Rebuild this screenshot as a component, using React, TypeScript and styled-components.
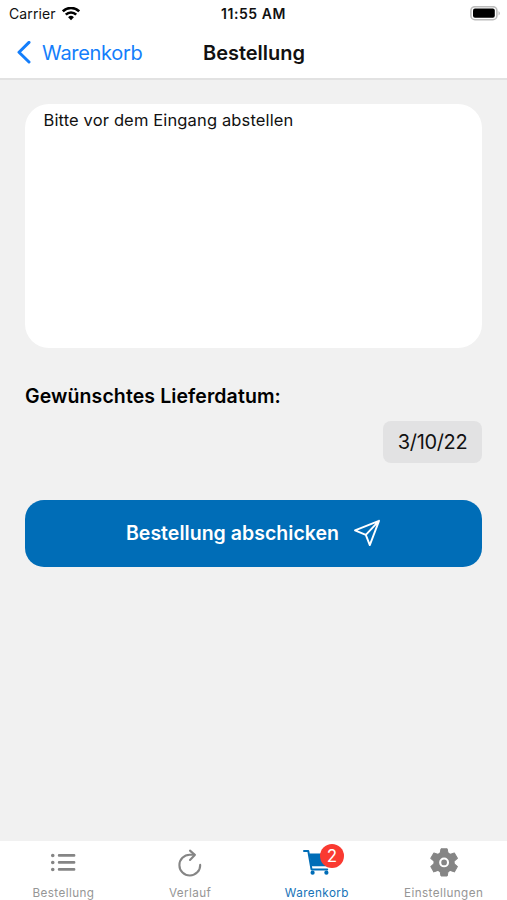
import React from 'react';
import styled, { createGlobalStyle } from 'styled-components';

const GlobalStyle = createGlobalStyle`
  * { box-sizing: border-box; }
  body { margin: 0; background: #f1f1f1; }
  button { font: inherit; border: 0; margin: 0; padding: 0; background: none; }
`;

const Screen = styled.div`
  display: flex;
  flex-direction: column;
  height: 900px;
  width: 507px;
  overflow: hidden;
  background: #f1f1f1;
  color: #111;
  font-family: Inter, 'Liberation Sans', sans-serif;
`;

const Header = styled.header`
  flex: none;
  height: 80px;
  background: #fff;
  border-bottom: 2px solid #e2e2e2;
`;

const Bar = styled.div<{ $height: number }>`
  display: grid;
  grid-template-columns: 1fr auto 1fr;
  align-items: center;
  height: ${(p) => p.$height}px;
`;

const Carrier = styled.div`
  display: flex;
  align-items: center;
  gap: 6px;
  padding-left: 9px;
  font-size: 14px;
  letter-spacing: 0.1px;
`;

const Clock = styled.div`
  font-size: 14px;
  font-weight: 600;
  letter-spacing: 0.55px;
`;

const Battery = styled.div`
  display: flex;
  justify-content: flex-end;
  padding-right: 6px;
`;

const Back = styled.button`
  display: flex;
  align-items: center;
  gap: 10px;
  padding-left: 17px;
  color: #147efb;
  font-size: 20px;
  letter-spacing: -0.3px;
`;

const Title = styled.h1`
  margin: 0;
  padding-left: 1px;
  font-size: 20px;
  font-weight: 600;
  letter-spacing: -0.02px;
`;

const Content = styled.main`
  flex: 1;
  display: flex;
  flex-direction: column;
  padding: 24px 25px 0;
`;

const Note = styled.div`
  height: 244px;
  padding: 5px 18.5px;
  border-radius: 24px;
  background: #fff;
  font-size: 16.5px;
  line-height: 22px;
  letter-spacing: 0.14px;
`;

const FieldLabel = styled.div`
  margin-top: 35px;
  font-size: 19.5px;
  font-weight: 600;
  line-height: 26px;
  letter-spacing: 0.1px;
  color: #000;
`;

const DateField = styled.button`
  align-self: flex-end;
  width: 99px;
  height: 42px;
  margin-top: 12px;
  border-radius: 8px;
  background: #e2e2e3;
  color: #111;
  font-size: 20px;
  letter-spacing: -0.35px;
`;

const Submit = styled.button`
  display: flex;
  align-items: center;
  justify-content: center;
  gap: 14px;
  height: 67px;
  margin-top: 36.5px;
  border-radius: 19px;
  background: #006db7;
  color: #fff;
  font-size: 19.5px;
  font-weight: 600;
  letter-spacing: 0.03px;
`;

const Tabs = styled.nav`
  flex: none;
  display: grid;
  grid-template-columns: repeat(4, 1fr);
  height: 59px;
  background: #fff;
`;

const Tab = styled.button<{ $active?: boolean }>`
  display: flex;
  flex-direction: column;
  align-items: center;
  color: ${(p) => (p.$active ? '#006db7' : '#858585')};
`;

const TabIcon = styled.span`
  position: relative;
  display: block;
  width: 30px;
  height: 30px;
  margin-top: 6px;
  svg { display: block; }
`;

const TabLabel = styled.span<{ $active?: boolean }>`
  margin-top: 9px;
  font-size: 11.7px;
  line-height: 15px;
  letter-spacing: 0.42px;
  color: ${(p) => (p.$active ? '#1673b8' : '#969696')};
`;

const Badge = styled.span`
  position: absolute;
  top: -3px;
  left: 18px;
  width: 24px;
  height: 24px;
  border-radius: 50%;
  background: #fa3a31;
  color: #fff;
  font-size: 17px;
  line-height: 24px;
  text-align: center;
`;

const WifiIcon = () => (
  <svg width="18" height="14" viewBox="0 0 18 14" fill="none" stroke="#000" strokeWidth="2.6">
    <path d="M0.8 4.3a11.8 11.8 0 0 1 16.4 0" />
    <path d="M3.8 7.6a7.4 7.4 0 0 1 10.4 0" />
    <path d="M9 13.2 6.1 10.2a4.1 4.1 0 0 1 5.8 0z" fill="#000" stroke="none" />
  </svg>
);

const BatteryIcon = () => (
  <svg width="31" height="15" viewBox="0 0 31 15">
    <rect x="0.9" y="0.7" width="26" height="13" rx="4" fill="#fff" stroke="#bcbcbc" strokeWidth="1.6" />
    <rect x="3" y="2.6" width="21.8" height="9.2" rx="2" fill="#000" />
    <path d="M28.6 4.9q2.3 2.3 0 4.6z" fill="#aaa" />
  </svg>
);

const Chevron = () => (
  <svg width="15" height="24" viewBox="0 0 15 24" fill="none" stroke="currentColor" strokeWidth="3" strokeLinecap="round" strokeLinejoin="round">
    <path d="M12 1.4 2 11.2l10 9.8" />
  </svg>
);

const PlaneIcon = () => (
  <svg width="28" height="28" viewBox="0 0 28 28" fill="none" stroke="currentColor" strokeWidth="1.9" strokeLinejoin="round" strokeLinecap="round">
    <path d="M26 1.8 2 11.4l10.8 4.4 4 10.3zM26 1.8 12.8 15.8" />
  </svg>
);

const ListIcon = () => (
  <svg width="30" height="30" viewBox="0 0 30 30" fill="none" stroke="currentColor" strokeWidth="2.6" strokeLinecap="round">
    <path d="M11.1 8.4h15M11.1 15.4h15M11.1 22.4h15" />
    <path d="M4.7 8.4h.1M4.7 15.4h.1M4.7 22.4h.1" strokeWidth="3.5" />
  </svg>
);

const ReloadIcon = () => (
  <svg width="30" height="30" viewBox="0 0 30 30" fill="none" stroke="currentColor" strokeWidth="2.1" strokeLinecap="round" strokeLinejoin="round">
    <path d="M25.2 17.9A10.4 10.4 0 1 1 14.8 7.7h4.7" />
    <path d="m15 3.6 4.8 4.3-4.8 5" />
  </svg>
);

const CartIcon = () => (
  <svg width="30" height="30" viewBox="0 0 30 30" fill="none" stroke="currentColor">
    <path d="M2 4.1h4.3l3.2 18.3h15.7" strokeWidth="2" strokeLinecap="round" strokeLinejoin="round" />
    <path d="M7.2 6.6h20.4l-2.2 12.6H9.3z" fill="currentColor" stroke="none" />
    <circle cx="10.6" cy="25.7" r="2.1" fill="currentColor" stroke="none" />
    <circle cx="24.4" cy="25.7" r="2.1" fill="currentColor" stroke="none" />
  </svg>
);

const GearIcon = () => (
  <svg width="30" height="30" viewBox="0 0 30 30" fill="currentColor">
    <circle cx="15.1" cy="15.4" r="10.6" />
    {[0, 60, 120].map((angle) => (
      <path
        key={angle}
        d="M12 1.8h6.2l.9 4.7v17.8l-.9 4.7H12l-.9-4.7V6.500z"
        stroke="currentColor"
        strokeWidth="1"
        strokeLinejoin="round"
        transform={`rotate(${angle} 15.1 15.4)`}
      />
    ))}
    <circle cx="15.1" cy="15.4" r="3.9" stroke="#fff" strokeWidth="2.1" />
  </svg>
);

const tabs = [
  { label: 'Bestellung', icon: ListIcon },
  { label: 'Verlauf', icon: ReloadIcon },
  { label: 'Warenkorb', icon: CartIcon, active: true, badge: 2 },
  { label: 'Einstellungen', icon: GearIcon },
];

export default function App() {
  return (
    <Screen>
      <GlobalStyle />
      <Header>
        <Bar $height={27}>
          <Carrier>Carrier <WifiIcon /></Carrier>
          <Clock>11:55 AM</Clock>
          <Battery><BatteryIcon /></Battery>
        </Bar>
        <Bar $height={51}>
          <Back><Chevron />Warenkorb</Back>
          <Title>Bestellung</Title>
        </Bar>
      </Header>
      <Content>
        <Note>Bitte vor dem Eingang abstellen</Note>
        <FieldLabel>Gewünschtes Lieferdatum:</FieldLabel>
        <DateField>3/10/22</DateField>
        <Submit>Bestellung abschicken <PlaneIcon /></Submit>
      </Content>
      <Tabs>
        {tabs.map(({ label, icon: Icon, active, badge }) => (
          <Tab key={label} $active={active}>
            <TabIcon>
              <Icon />
              {badge && <Badge>{badge}</Badge>}
            </TabIcon>
            <TabLabel $active={active}>{label}</TabLabel>
          </Tab>
        ))}
      </Tabs>
    </Screen>
  );
}
